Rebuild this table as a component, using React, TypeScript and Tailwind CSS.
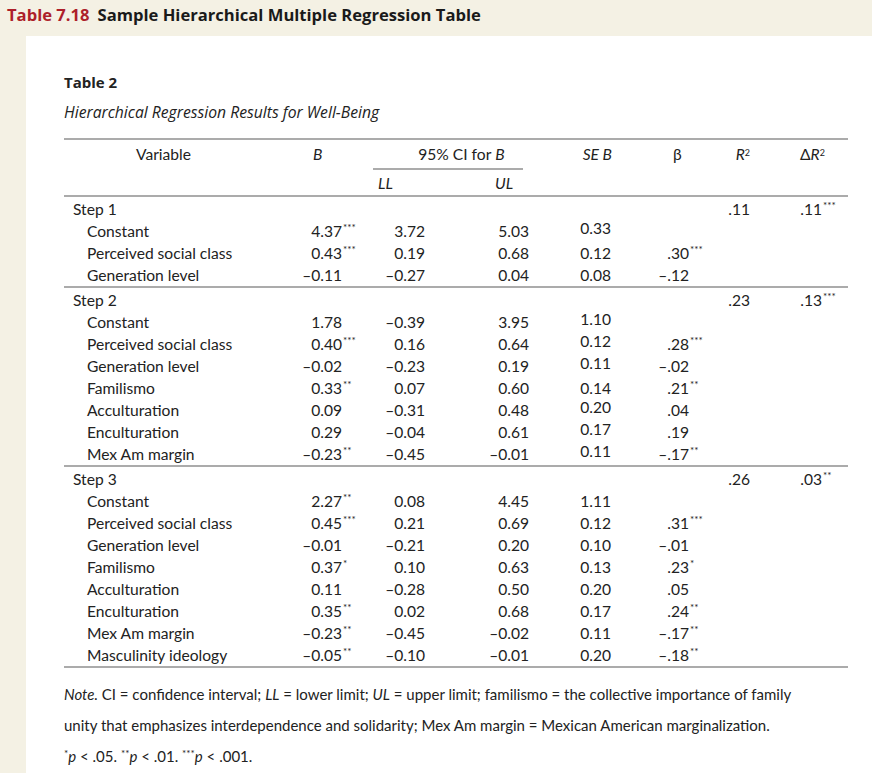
type Cell = { v?: string; s?: string; up?: boolean }

type Row = {
  label: string
  step?: boolean
  b?: Cell
  ll?: string
  ul?: string
  se?: Cell
  beta?: Cell
  r2?: string
  dr2?: Cell
}

const sections: Row[][] = [
  [
    { label: 'Step 1', step: true, r2: '.11', dr2: { v: '.11', s: '***' } },
    { label: 'Constant', b: { v: '4.37', s: '***' }, ll: '3.72', ul: '5.03', se: { v: '0.33', up: true } },
    { label: 'Perceived social class', b: { v: '0.43', s: '***' }, ll: '0.19', ul: '0.68', se: { v: '0.12' }, beta: { v: '.30', s: '***' } },
    { label: 'Generation level', b: { v: '–0.11' }, ll: '–0.27', ul: '0.04', se: { v: '0.08' }, beta: { v: '–.12' } },
  ],
  [
    { label: 'Step 2', step: true, r2: '.23', dr2: { v: '.13', s: '***' } },
    { label: 'Constant', b: { v: '1.78' }, ll: '–0.39', ul: '3.95', se: { v: '1.10', up: true } },
    { label: 'Perceived social class', b: { v: '0.40', s: '***' }, ll: '0.16', ul: '0.64', se: { v: '0.12', up: true }, beta: { v: '.28', s: '***' } },
    { label: 'Generation level', b: { v: '–0.02' }, ll: '–0.23', ul: '0.19', se: { v: '0.11', up: true }, beta: { v: '–.02' } },
    { label: 'Familismo', b: { v: '0.33', s: '**' }, ll: '0.07', ul: '0.60', se: { v: '0.14' }, beta: { v: '.21', s: '**' } },
    { label: 'Acculturation', b: { v: '0.09' }, ll: '–0.31', ul: '0.48', se: { v: '0.20', up: true }, beta: { v: '.04' } },
    { label: 'Enculturation', b: { v: '0.29' }, ll: '–0.04', ul: '0.61', se: { v: '0.17', up: true }, beta: { v: '.19' } },
    { label: 'Mex Am margin', b: { v: '–0.23', s: '**' }, ll: '–0.45', ul: '–0.01', se: { v: '0.11', up: true }, beta: { v: '–.17', s: '**' } },
  ],
  [
    { label: 'Step 3', step: true, r2: '.26', dr2: { v: '.03', s: '**' } },
    { label: 'Constant', b: { v: '2.27', s: '**' }, ll: '0.08', ul: '4.45', se: { v: '1.11' } },
    { label: 'Perceived social class', b: { v: '0.45', s: '***' }, ll: '0.21', ul: '0.69', se: { v: '0.12' }, beta: { v: '.31', s: '***' } },
    { label: 'Generation level', b: { v: '–0.01' }, ll: '–0.21', ul: '0.20', se: { v: '0.10' }, beta: { v: '–.01' } },
    { label: 'Familismo', b: { v: '0.37', s: '*' }, ll: '0.10', ul: '0.63', se: { v: '0.13' }, beta: { v: '.23', s: '*' } },
    { label: 'Acculturation', b: { v: '0.11' }, ll: '–0.28', ul: '0.50', se: { v: '0.20' }, beta: { v: '.05' } },
    { label: 'Enculturation', b: { v: '0.35', s: '**' }, ll: '0.02', ul: '0.68', se: { v: '0.17' }, beta: { v: '.24', s: '**' } },
    { label: 'Mex Am margin', b: { v: '–0.23', s: '**' }, ll: '–0.45', ul: '–0.02', se: { v: '0.11' }, beta: { v: '–.17', s: '**' } },
    { label: 'Masculinity ideology', b: { v: '–0.05', s: '**' }, ll: '–0.10', ul: '–0.01', se: { v: '0.20' }, beta: { v: '–.18', s: '**' } },
  ],
]

const tableFont = { fontFamily: 'Lato, "Open Sans", sans-serif' }

// number right-aligned, with a slot for significance stars
function Num({ cell, w, slot }: { cell?: Cell; w: string; slot: string }) {
  return (
    <div className={`flex ${w}`}>
      <span className={`flex-1 text-right ${cell?.up ? '-translate-y-[3px]' : ''}`}>{cell?.v}</span>
      <span className={`${slot} text-[10px] leading-[12px] pl-[1px] self-start`}>{cell?.s}</span>
    </div>
  )
}

function DataRow({ row }: { row: Row }) {
  return (
    <div className="flex h-[22px] items-center">
      <div className={`w-[230px] ${row.step ? 'pl-[9px]' : 'pl-[23px]'}`}>{row.label}</div>
      <Num cell={row.b} w="w-[64px]" slot="w-[16px]" />
      <div className="w-[67px] text-right">{row.ll}</div>
      <div className="w-[104px] text-right">{row.ul}</div>
      <Num cell={row.se} w="w-[83px]" slot="w-0" />
      <Num cell={row.beta} w="w-[93px]" slot="w-[16px]" />
      <div className="w-[45px] text-right">{row.r2}</div>
      <Num cell={row.dr2} w="w-[88px]" slot="w-[16px]" />
    </div>
  )
}

export default function App() {
  return (
    <div className="h-[773px] w-[872px] overflow-hidden bg-[#f4f1e4] flex flex-col">
      {/* Caption bar */}
      <div
        className="h-[36px] pl-[7px] pt-[3px] text-[16.6px] font-bold leading-[24px] text-[#1a1a1a]"
        style={{ fontFamily: '"Open Sans", sans-serif' }}
      >
        <span className="text-[#ad1f2a]">Table 7.18</span>
        <span className="ml-[8px]">Sample Hierarchical Multiple Regression Table</span>
      </div>

      {/* White page */}
      <div className="ml-[26px] flex-1 bg-white pl-[38px] text-[#222]">
        <div
          className="pt-[36px] text-[15px] font-bold leading-[20px]"
          style={{ fontFamily: '"Open Sans", sans-serif' }}
        >
          Table 2
        </div>
        <div
          className="mt-[10px] text-[15.7px] italic leading-[20px]"
          style={{ fontFamily: '"Open Sans", sans-serif' }}
        >
          Hierarchical Regression Results for Well-Being
        </div>

        <div className="mt-[16px] w-[784px] text-[15.6px] leading-[20px]" style={tableFont}>
          {/* Header */}
          <div className="border-t-2 border-b-2 border-[#ababab]">
            <div className="flex h-[30px] items-start pt-[4px]">
              <div className="w-[230px] pl-[72px]">Variable</div>
              <div className="w-[64px] pl-[19px] italic">B</div>
              <div className="flex h-[26px] w-[171px] flex-col">
                <div className="flex flex-1 justify-center pl-[36px]">
                  95% CI for <span className="ml-[4px] italic">B</span>
                </div>
                <div className="ml-[15px] mr-[6px] h-[2px] bg-[#ababab]" />
              </div>
              <div className="w-[83px] text-right italic">SE B</div>
              <div className="w-[93px] pl-[61px]">β</div>
              <div className="w-[45px] text-right italic">
                R<sup className="text-[9px] not-italic">2</sup>
              </div>
              <div className="w-[88px] pl-[50px]">
                Δ<span className="italic">R</span>
                <sup className="text-[9px]">2</sup>
              </div>
            </div>
            <div className="flex h-[25px] items-center italic">
              <div className="w-[314px]" />
              <div className="w-[40px]">LL</div>
              <div className="pl-[77px]">UL</div>
            </div>
          </div>

          {/* Body */}
          {sections.map((rows, i) => (
            <div key={i} className="border-b-2 border-[#ababab] pt-[1px]">
              {rows.map((r) => (
                <DataRow key={r.label} row={r} />
              ))}
            </div>
          ))}
        </div>

        {/* Note */}
        <div className="mt-[11px] text-[15px] leading-[31px]" style={tableFont}>
          <div>
            <span className="italic">Note.</span> CI = confidence interval; <span className="italic">LL</span> = lower limit;{' '}
            <span className="italic">UL</span> = upper limit; familismo = the collective importance of family
          </div>
          <div>unity that emphasizes interdependence and solidarity; Mex Am margin = Mexican American marginalization.</div>
          <div>
            <sup className="text-[10px]">*</sup>
            <span className="italic">p</span> &lt; .05. <sup className="text-[10px]">**</sup>
            <span className="italic">p</span> &lt; .01. <sup className="text-[10px]">***</sup>
            <span className="italic">p</span> &lt; .001.
          </div>
        </div>
      </div>
    </div>
  )
}
